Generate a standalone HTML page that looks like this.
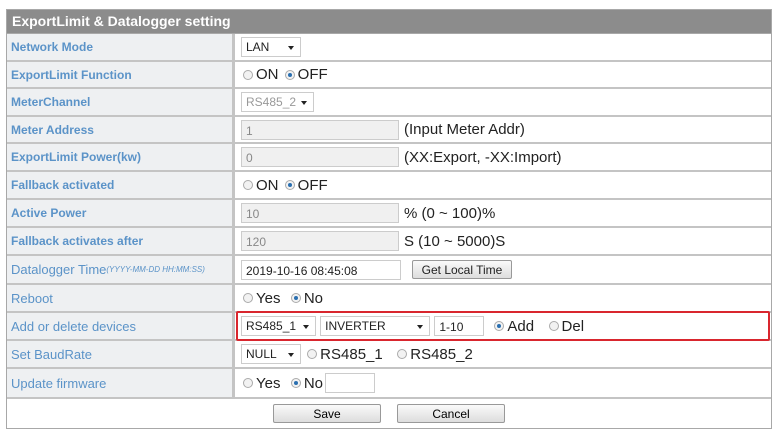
<!DOCTYPE html>
<html><head><meta charset="utf-8"><style>
body{margin:0;background:#fff;font-family:"Liberation Sans",Arial,sans-serif;width:778px;height:438px;overflow:hidden;position:relative}
.t{position:absolute;left:6px;top:9px;width:766px;border:1px solid #a8a8a8;box-sizing:border-box}
.h{height:23px;background:#8c8c8c;color:#fff;font-weight:bold;font-size:14px;line-height:23px;padding-left:5px;border-bottom:1px solid #a8a8a8}
.r{display:flex;border-bottom:2px solid #c4c4c4;box-sizing:border-box}
.l{width:228px;background:#eef0f2;color:#5b93c8;font-weight:bold;font-size:12px;padding-left:4px;display:flex;align-items:center;border-right:3px solid #c4c4c4;box-sizing:border-box;white-space:nowrap}
.v{flex:1;display:flex;align-items:center;padding-left:6px;font-size:15px;color:#222;white-space:nowrap}
.n{font-weight:normal;font-size:13px}
.sel{border:1px solid #ccc;height:20px;box-sizing:border-box;font-size:12px;display:inline-flex;align-items:center;padding-left:4px;position:relative;background:#fff}
.sel:after{content:"";position:absolute;right:6px;top:8px;border:3px solid transparent;border-top:4px solid #222}
.in{width:158px;height:20px;border:1px solid #ccc;background:#f0f0f0;box-sizing:border-box;font-size:12px;color:#888;padding:3px 4px;margin-right:5px}
.rd{width:10px;height:10px;border-radius:50%;border:1px solid #aaa;background:#f2f2f2;box-sizing:border-box;display:inline-block;margin:0 3px 0 2px;position:relative}
.rd.on:after{content:"";position:absolute;left:2px;top:2px;width:4px;height:4px;border-radius:50%;background:#2a6fb0}
.btn{height:19px;border:1px solid #999;border-radius:2px;background:linear-gradient(#fafafa,#ddd);font-size:12px;display:inline-flex;align-items:center;justify-content:center;box-sizing:border-box;white-space:nowrap}
</style></head><body>
<div class="t">
<div class="h">ExportLimit &amp; Datalogger setting</div>
<div class="r" style="height:28px"><div class="l">Network Mode</div><div class="v"><span class="sel" style="width:60px">LAN</span></div></div>
<div class="r" style="height:27px"><div class="l">ExportLimit Function</div><div class="v"><span class="rd"></span>ON&nbsp;<span class="rd on"></span>OFF</div></div>
<div class="r" style="height:28px"><div class="l">MeterChannel</div><div class="v"><span class="sel" style="width:73px;color:#999">RS485_2</span></div></div>
<div class="r" style="height:27px"><div class="l">Meter Address</div><div class="v"><span class="in">1</span>(Input Meter Addr)</div></div>
<div class="r" style="height:28px"><div class="l">ExportLimit Power(kw)</div><div class="v"><span class="in">0</span>(XX:Export, -XX:Import)</div></div>
<div class="r" style="height:28px"><div class="l">Fallback activated</div><div class="v"><span class="rd"></span>ON&nbsp;<span class="rd on"></span>OFF</div></div>
<div class="r" style="height:28px"><div class="l">Active Power</div><div class="v"><span class="in">10</span>% (0 ~ 100)%</div></div>
<div class="r" style="height:28px"><div class="l">Fallback activates after</div><div class="v"><span class="in">120</span>S (10 ~ 5000)S</div></div>
<div class="r" style="height:29px"><div class="l n">Datalogger Time<i style="font-size:8px">(YYYY-MM-DD HH:MM:SS)</i></div><div class="v"><span class="in" style="background:#fff;color:#222;width:160px;margin-right:11px">2019-10-16 08:45:08</span><span class="btn" style="width:100px">Get Local Time</span></div></div>
<div class="r" style="height:28px"><div class="l n">Reboot</div><div class="v"><span class="rd"></span>Yes&nbsp;&nbsp;<span class="rd on"></span>No</div></div>
<div class="r" style="height:28px"><div class="l n">Add or delete devices</div><div class="v"><span class="sel" style="width:75px;color:#222">RS485_1</span>&nbsp;<span class="sel" style="width:110px;color:#222">INVERTER</span>&nbsp;<span class="in" style="background:#fff;color:#222;width:50px;margin-right:8px">1-10</span><span class="rd on"></span>Add&nbsp;&nbsp;&nbsp;<span class="rd"></span>Del</div></div>
<div class="r" style="height:28px"><div class="l n">Set BaudRate</div><div class="v"><span class="sel" style="width:60px;color:#222">NULL</span>&nbsp;<span class="rd"></span>RS485_1&nbsp;&nbsp;&nbsp;<span class="rd"></span>RS485_2</div></div>
<div class="r" style="height:30px"><div class="l n">Update firmware</div><div class="v"><span class="rd"></span>Yes&nbsp;&nbsp;<span class="rd on"></span>No<span class="in" style="background:#fff;width:50px;margin-left:2px"></span></div></div>
<div style="height:29px;display:flex;align-items:center;justify-content:center;gap:16px"><span class="btn" style="width:108px">Save</span><span class="btn" style="width:108px">Cancel</span></div>
</div>
<div style="position:absolute;left:236px;top:311px;width:534px;height:30px;border:2px solid #d9262e;border-radius:2px;box-sizing:border-box"></div>
</body></html>
